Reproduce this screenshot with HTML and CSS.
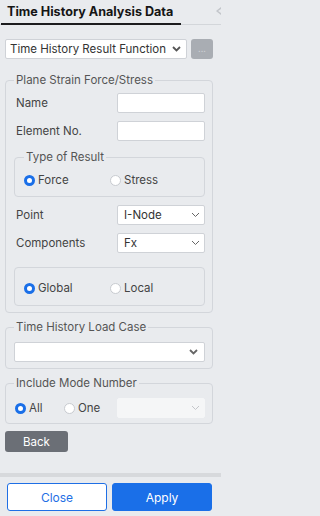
FILE: index.html
```html
<!DOCTYPE html>
<html>
<head>
<meta charset="utf-8">
<link rel="stylesheet" href="styles.css">
</head>
<body>
<header class="tabs">
  <div class="tab">Time History Analysis Data</div>
  <svg class="collapse" width="10" height="12" viewBox="0 0 10 12"><path d="M8 1.5 L2 6 L8 10.5 Z" fill="none" stroke="#c3c6cb" stroke-width="1.5" stroke-linejoin="round"/></svg>
</header>
<main class="panel">
  <div class="func-row">
    <div class="select wide"><span>Time History Result Function</span>
      <svg class="chev bold" width="9" height="6" viewBox="0 0 9 6"><path d="M1 1 L4.5 4.5 L8 1" fill="none" stroke="#555" stroke-width="1.8"/></svg>
    </div>
    <button class="more">...</button>
  </div>

  <fieldset class="group">
    <legend>Plane Strain Force/Stress</legend>
    <div class="row first"><span class="label">Name</span><div class="input"></div></div>
    <div class="row"><span class="label">Element No.</span><div class="input"></div></div>

    <fieldset class="sub">
      <legend>Type of Result</legend>
      <div class="radios">
        <span class="opt"><span class="radio on"></span>Force</span>
        <span class="opt"><span class="radio"></span>Stress</span>
      </div>
    </fieldset>

    <div class="row"><span class="label">Point</span>
      <div class="select small"><span>I-Node</span>
        <svg class="chev" width="9" height="6" viewBox="0 0 9 6"><path d="M1 1 L4.5 4.5 L8 1" fill="none" stroke="#666" stroke-width="1"/></svg>
      </div>
    </div>
    <div class="row"><span class="label">Components</span>
      <div class="select small"><span>Fx</span>
        <svg class="chev" width="9" height="6" viewBox="0 0 9 6"><path d="M1 1 L4.5 4.5 L8 1" fill="none" stroke="#666" stroke-width="1"/></svg>
      </div>
    </div>

    <div class="sub plain">
      <div class="radios">
        <span class="opt"><span class="radio on"></span>Global</span>
        <span class="opt"><span class="radio"></span>Local</span>
      </div>
    </div>
  </fieldset>

  <fieldset class="group second">
    <legend>Time History Load Case</legend>
    <div class="select full"><span></span>
      <svg class="chev bold" width="9" height="6" viewBox="0 0 9 6"><path d="M1 1 L4.5 4.5 L8 1" fill="none" stroke="#666" stroke-width="1.8"/></svg>
    </div>
  </fieldset>

  <fieldset class="group second mode">
    <legend>Include Mode Number</legend>
    <div class="mode-row">
      <span class="opt all"><span class="radio on"></span>All</span>
      <span class="opt one"><span class="radio"></span>One</span>
      <div class="select small disabled"><span></span>
        <svg class="chev" width="9" height="6" viewBox="0 0 9 6"><path d="M1 1 L4.5 4.5 L8 1" fill="none" stroke="#c4c6ca" stroke-width="1"/></svg>
      </div>
    </div>
  </fieldset>

  <button class="back">Back</button>
</main>
<footer class="footer">
  <button class="btn close">Close</button>
  <button class="btn apply">Apply</button>
</footer>
</body>
</html>
```

FILE: styles.css
```css
html, body {
  margin: 0;
  padding: 0;
}
body {
  width: 221px;
  height: 516px;
  overflow: hidden;
  background: #e9ebee;
  font-family: Inter, "Noto Sans", sans-serif;
  font-size: 11.5px;
  color: #444;
  display: flex;
  flex-direction: column;
}
.tabs {
  display: flex;
  align-items: center;
  height: 25px;
  box-sizing: border-box;
  border-bottom: 1px solid #d3d6da;
  padding-left: 1px;
}
.tab {
  width: 180px;
  height: 25px;
  box-sizing: border-box;
  padding-left: 6px;
  line-height: 23px;
  border-bottom: 2px solid #1c1c1e;
  margin-bottom: -1px;
  align-self: flex-start;
  font-weight: 700;
  font-size: 12.6px;
  color: #151515;
  white-space: nowrap;
}
.collapse {
  margin-left: auto;
  margin-right: -4px;
  margin-top: -2px;
}
.panel {
  flex: 1;
  padding: 14px 8px 0 5px;
}
.func-row {
  display: flex;
  gap: 4px;
}
.select {
  height: 20px;
  box-sizing: border-box;
  background: #fff;
  border: 1px solid #cfd2d7;
  border-radius: 2px;
  display: flex;
  align-items: center;
  justify-content: space-between;
  padding: 0 5px 0 4px;
  color: #333;
  white-space: nowrap;
  overflow: hidden;
}
.select.wide {
  width: 182px;
  padding-right: 5px;
}
.select.small {
  width: 88px;
  padding-left: 6px;
  padding-right: 4px;
}
.select.full {
  width: 100%;
  padding-right: 6px;
}
.select.disabled {
  background: #f5f6f7;
  border-color: #f5f6f7;
}
.chev {
  flex: none;
}
.more {
  width: 22px;
  height: 20px;
  border: none;
  border-radius: 3px;
  background: #a9adb3;
  color: #cdd0d4;
  font-family: inherit;
  font-size: 9px;
  padding: 0;
  line-height: 20px;
}
.group {
  margin: 13px 0 0;
  border: 1px solid #d3d6db;
  border-radius: 4px;
  padding: 5px 7px 6px 8px;
  min-width: 0;
}
.group legend, .sub legend {
  padding: 0 2px;
  line-height: 16px;
  color: #555;
}
.group.second {
  margin-top: 6px;
  padding-top: 7px;
}
.group.mode {
  padding-bottom: 5px;
}
.row {
  display: flex;
  align-items: center;
  justify-content: space-between;
  height: 20px;
  margin-top: 8px;
}
.row.first {
  margin-top: 0;
}
.label {
  padding-left: 2px;
  color: #444;
}
.input {
  width: 88px;
  height: 20px;
  box-sizing: border-box;
  background: #fff;
  border: 1px solid #cfd2d7;
  border-radius: 2px;
}
.sub {
  margin: 8px 0 0;
  border: 1px solid #d3d6db;
  border-radius: 4px;
  padding: 7px 8px 8px 9px;
  min-width: 0;
}
.sub.plain {
  margin-top: 14px;
  padding: 12px 8px 9px 9px;
}
.radios {
  display: flex;
  height: 16px;
  align-items: center;
}
.opt {
  display: inline-flex;
  align-items: center;
  gap: 3px;
  width: 90px;
  color: #444;
}
.radio {
  width: 11px;
  height: 11px;
  box-sizing: border-box;
  border-radius: 50%;
  border: 1px solid #c8cbd0;
  background: #fff;
  flex: none;
}
.radio.on {
  border: 3.5px solid #1a6fe8;
}
.mode-row {
  display: flex;
  align-items: center;
  height: 20px;
}
.opt.all {
  width: 49px;
  margin-left: 1px;
}
.opt.one {
  width: 50px;
}
.mode-row .select {
  margin-left: auto;
}
.back {
  display: block;
  margin-top: 7px;
  width: 63px;
  height: 21px;
  border: none;
  border-radius: 3px;
  background: #6b6f76;
  color: #fff;
  font-family: inherit;
  font-size: 11.5px;
  padding: 0;
}
.footer {
  border-top: 4px solid #d7d9dc;
  padding: 6px 9px 5px 7px;
  display: flex;
  gap: 5px;
}
.btn {
  width: 100px;
  height: 28px;
  border-radius: 3px;
  font-family: inherit;
  font-size: 12px;
  padding: 0;
}
.close {
  background: #fff;
  border: 1px solid #1f6fe5;
  color: #1f6fe5;
}
.apply {
  background: #1a6fe8;
  border: 1px solid #1a6fe8;
  color: #fff;
}
```
